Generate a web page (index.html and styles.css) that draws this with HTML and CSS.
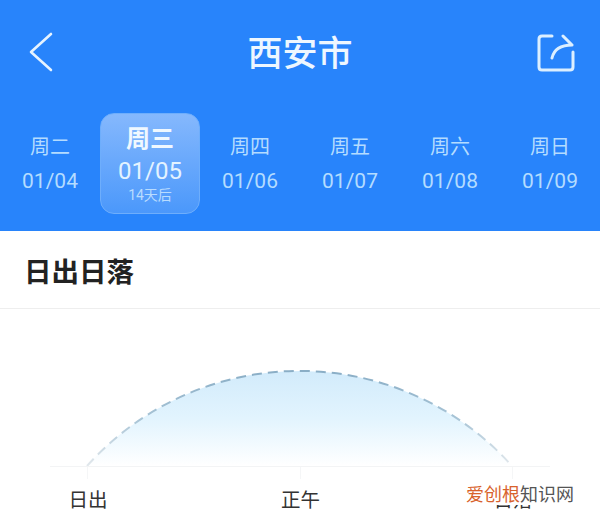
FILE: index.html
```html
<!DOCTYPE html>
<html lang="zh-CN">
<head>
    <meta charset="UTF-8">
    <title>西安市</title>
    <link rel="stylesheet" href="styles.css">
</head>
<body>
    <div class="page">
        <!-- Cabecera azul -->
        <header class="header">
            <div class="topbar">
                <svg class="icon" width="40" height="48" viewBox="0 0 40 48">
                    <path d="M27 4 L7 22 L27 40" fill="none" stroke="#e6f3ff" stroke-width="2.6" stroke-linecap="round" stroke-linejoin="round"/>
                </svg>
                <h1 class="city">西安市</h1>
                <svg class="icon" width="40" height="40" viewBox="0 0 40 40">
                    <path d="M16 2 H6 Q3 2 3 5 V33 Q3 36 6 36 H34 Q37 36 37 33 V18" fill="none" stroke="#dcefff" stroke-width="3" stroke-linecap="round"/>
                    <path d="M16 24 Q19 11 36 11 M27 2 L36 11" fill="none" stroke="#dcefff" stroke-width="3" stroke-linecap="round" stroke-linejoin="round"/>
                </svg>
            </div>
            <div class="days">
                <div class="day"><span class="day-name">周二</span><span class="day-date">01/04</span></div>
                <div class="day active"><span class="day-name">周三</span><span class="day-date">01/05</span><span class="day-note">14天后</span></div>
                <div class="day"><span class="day-name">周四</span><span class="day-date">01/06</span></div>
                <div class="day"><span class="day-name">周五</span><span class="day-date">01/07</span></div>
                <div class="day"><span class="day-name">周六</span><span class="day-date">01/08</span></div>
                <div class="day"><span class="day-name">周日</span><span class="day-date">01/09</span></div>
            </div>
        </header>

        <!-- Sección del sol -->
        <section class="sun">
            <h2 class="sun-title">日出日落</h2>
            <svg class="chart" width="600" height="158" viewBox="0 0 600 158">
                <defs>
                    <linearGradient id="arcFill" x1="0" y1="0" x2="0" y2="1">
                        <stop offset="0" stop-color="#d2ebfb"/>
                        <stop offset="0.5" stop-color="#e2f4fe"/>
                        <stop offset="1" stop-color="#ffffff"/>
                    </linearGradient>
                    <linearGradient id="arcLine" gradientUnits="userSpaceOnUse" x1="0" y1="62" x2="0" y2="157">
                        <stop offset="0" stop-color="#8aaec6"/>
                        <stop offset="0.5" stop-color="#a8c4d6"/>
                        <stop offset="1" stop-color="#e2e8ec"/>
                    </linearGradient>
                </defs>
                <path d="M87 157 A285 285 0 0 1 512 157 Z" fill="url(#arcFill)"/>
                <path d="M87 157 A285 285 0 0 1 512 157" fill="none" stroke="url(#arcLine)" stroke-width="2" stroke-dasharray="10 6"/>
                <path d="M50 157.5 H550" stroke="#f3f4f5" stroke-width="1"/>
            </svg>
            <div class="ticks">
                <span class="tick"></span>
                <span class="tick"></span>
                <span class="tick"></span>
            </div>
            <div class="labels">
                <span class="label">日出</span>
                <span class="label">正午</span>
                <span class="label">日落</span>
            </div>
        </section>

        <div class="watermark"><span class="wm-orange">爱创根</span>知识网</div>
    </div>
</body>
</html>
```

FILE: styles.css
```css
* {
    box-sizing: border-box;
}
html, body {
    margin: 0;
    height: 514px;
    overflow: hidden;
    background-color: white;
}
.page {
    position: relative;
    height: 514px;
    overflow: hidden;
    font-family: Roboto, "Noto Sans CJK SC", sans-serif;
}

/* Cabecera */
.header {
    height: 231px;
    padding-top: 30px;
    background-color: #2884fb;
}
.topbar {
    display: flex;
    justify-content: space-between;
    align-items: center;
    height: 48px;
    padding: 0 24px;
}
.icon {
    display: block;
}
.city {
    margin: 1px 0 0;
    color: #eef7ff;
    font-size: 35px;
    font-weight: 500;
    line-height: 48px;
}

/* Días */
.days {
    display: grid;
    grid-template-columns: repeat(6, 100px);
    margin-top: 35px;
}
.day {
    display: flex;
    flex-direction: column;
    align-items: center;
    height: 101px;
    padding-top: 20px;
    color: #b4dcff;
}
.day-name {
    font-size: 20px;
    line-height: 28px;
}
.day-date {
    margin-top: 7px;
    font-size: 21px;
    line-height: 26px;
}
.day.active {
    padding-top: 10px;
    border: 1px solid #6eaefc;
    border-radius: 14px;
    background: linear-gradient(#85b8fd, #4b98fb);
    color: #e4f3ff;
}
.day.active .day-name {
    color: #f0f8ff;
    font-size: 24px;
    font-weight: 700;
    line-height: 30px;
}
.day.active .day-date {
    margin-top: 2px;
    font-size: 24px;
    line-height: 30px;
}
.day-note {
    color: #b9dcff;
    font-size: 14px;
    line-height: 18px;
}

/* Sol */
.sun-title {
    margin: 0;
    height: 78px;
    padding: 23px 0 0 24px;
    border-bottom: 1px solid #eeeeee;
    color: #222;
    font-size: 27.5px;
    font-weight: 700;
    line-height: 38px;
}
.chart {
    display: block;
}
.ticks {
    display: flex;
    justify-content: space-between;
    padding: 0 87px;
    height: 12px;
}
.tick {
    width: 1px;
    height: 12px;
    background-color: #f5f6f7;
}
.labels {
    display: flex;
    justify-content: space-between;
    margin-top: 8px;
    padding: 0 47px 0 48px;
}
.label {
    width: 80px;
    color: #333;
    font-size: 19.5px;
    line-height: 28px;
    text-align: center;
}

/* Marca de agua */
.watermark {
    position: absolute;
    right: 26px;
    top: 484px;
    height: 21px;
    padding-left: 2px;
    background-color: white;
    color: #555;
    font-size: 18px;
    line-height: 22px;
}
.wm-orange {
    color: #d8622c;
}
```
